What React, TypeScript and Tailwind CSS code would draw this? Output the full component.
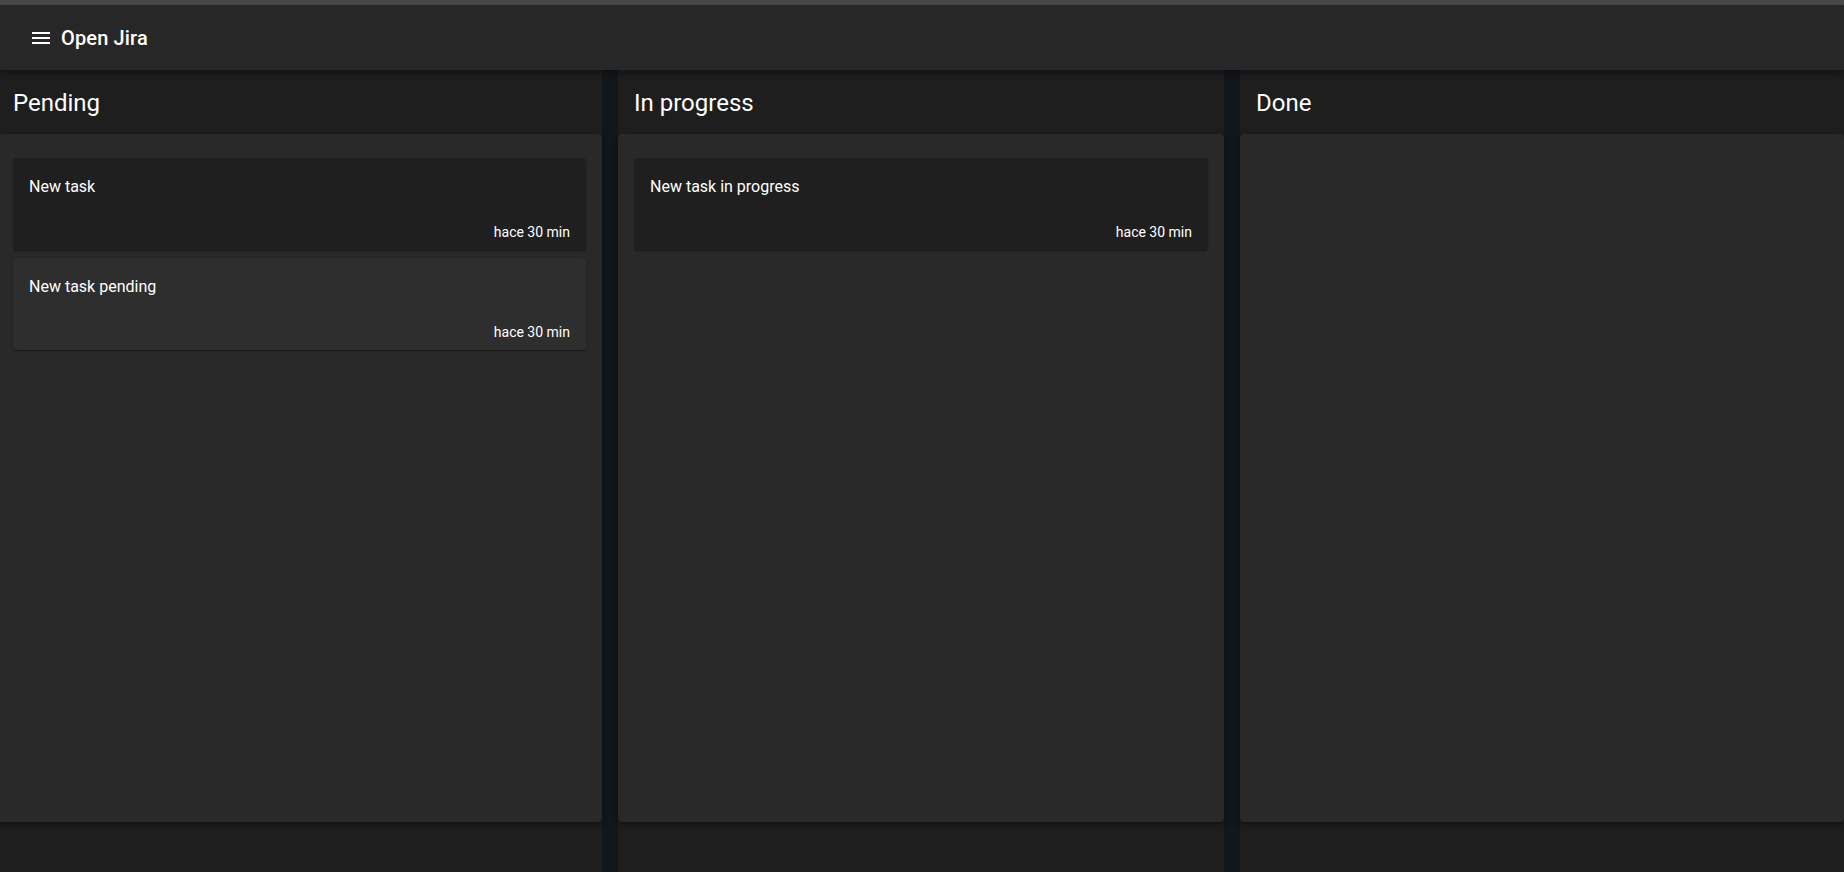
import React from "react";

type Task = { title: string; time: string; dark: boolean };

const columns: { name: string; tasks: Task[]; cls: string }[] = [
  {
    name: "Pending",
    cls: "w-[605px]",
    tasks: [
      { title: "New task", time: "hace 30 min", dark: true },
      { title: "New task pending", time: "hace 30 min", dark: false },
    ],
  },
  {
    name: "In progress",
    cls: "w-[606px]",
    tasks: [{ title: "New task in progress", time: "hace 30 min", dark: true }],
  },
  { name: "Done", cls: "flex-1", tasks: [] },
];

function TaskCard({ task }: { task: Task }) {
  return (
    <div
      className={`rounded-[4px] ${
        task.dark ? "bg-[#1f1f1f]" : "bg-[#2e2e2e]"
      } shadow-[0_2px_1px_-1px_rgba(0,0,0,0.2),0_1px_1px_0_rgba(0,0,0,0.14),0_1px_3px_0_rgba(0,0,0,0.12)]`}
    >
      <div className="px-4 pt-[17px] pb-[15px] text-base leading-6 text-white">{task.title}</div>
      <div className="flex justify-end px-4 py-2 text-sm leading-5 text-white">
        {task.time}
      </div>
    </div>
  );
}

export default function App() {
  return (
    <div className="h-screen overflow-hidden bg-[#12171b] font-['Roboto','Liberation_Sans',sans-serif] text-white">
      <div className="h-[5px] bg-[#4a4a4a]" />
      <header className="relative z-10 flex h-[65px] items-center bg-[#272727] pl-[29px] shadow-[0_2px_4px_-1px_rgba(0,0,0,0.2),0_4px_5px_0_rgba(0,0,0,0.14),0_1px_10px_0_rgba(0,0,0,0.12)]">
        <svg width="24" height="24" viewBox="0 0 24 24" fill="#ffffff">
          <path d="M3 18h18v-2H3v2zm0-5h18v-2H3v2zm0-7v2h18V6H3z" />
        </svg>
        <span className="ml-[8px] text-[20px] font-medium leading-8 tracking-[0.15px]">
          Open Jira
        </span>
      </header>
      <div className="-ml-[3px] flex gap-4">
        {columns.map((col) => (
          <section
            key={col.name}
            className={`${col.cls} flex h-[802px] flex-col bg-[#1e1e1e]`}
          >
            <div className="flex h-16 shrink-0 items-center px-4 pt-[2px] text-2xl leading-8">
              {col.name}
            </div>
            <div className="flex h-[688px] flex-col gap-2 rounded-[4px] bg-[#292929] px-4 pt-6 shadow-[0_2px_4px_-1px_rgba(0,0,0,0.2),0_4px_5px_0_rgba(0,0,0,0.14),0_1px_10px_0_rgba(0,0,0,0.12)]">
              {col.tasks.map((t) => (
                <TaskCard key={t.title} task={t} />
              ))}
            </div>
          </section>
        ))}
      </div>
    </div>
  );
}
